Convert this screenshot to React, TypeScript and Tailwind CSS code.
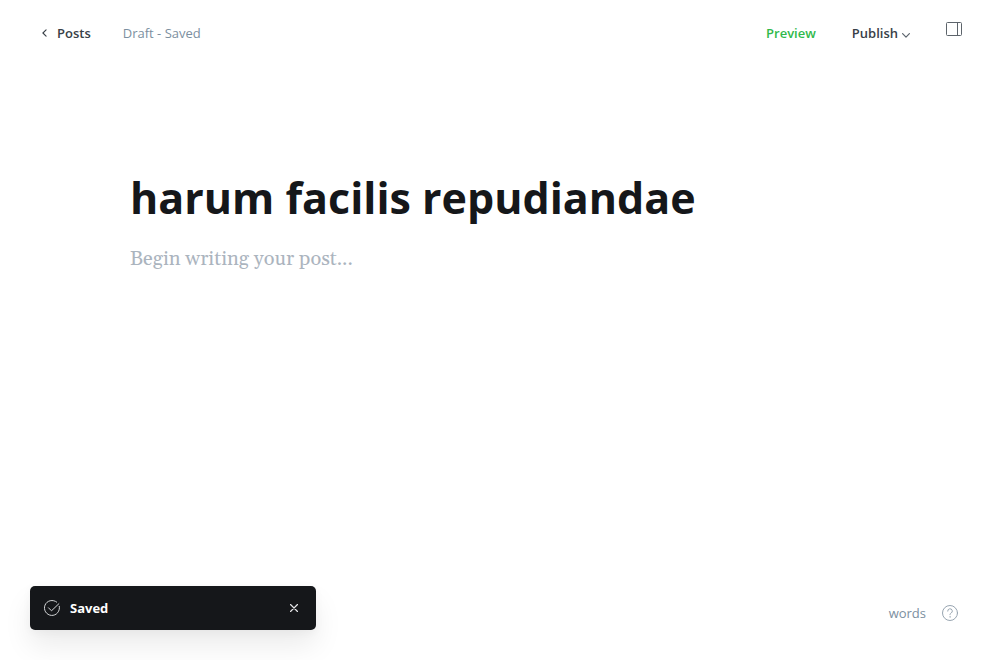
import { useState } from "react";

function ArrowLeft() {
  return (
    <svg viewBox="0 0 6 10" className="h-2 w-[5px]" fill="none" stroke="#394047" strokeWidth="1.4" strokeLinecap="round" strokeLinejoin="round" aria-hidden="true">
      <path d="M5 1 1 5l4 4" />
    </svg>
  );
}

function ArrowDown() {
  return (
    <svg viewBox="0 0 8 5" className="mt-1 h-[5px] w-2" fill="none" stroke="#5d656e" strokeWidth="1.2" strokeLinecap="round" strokeLinejoin="round" aria-hidden="true">
      <path d="m.6.6 3.4 3.5L7.4.6" />
    </svg>
  );
}

function SidebarIcon() {
  return (
    <svg viewBox="0 0 16 14" className="h-[14px] w-4" fill="none" stroke="#5d646b" aria-hidden="true">
      <rect x=".5" y=".5" width="15" height="13" rx="1" />
      <path d="M11.5.5v13" />
    </svg>
  );
}

function CheckCircle() {
  return (
    <svg viewBox="0 0 16 16" className="size-4" fill="none" stroke="#d5d7d9" strokeLinecap="round" strokeLinejoin="round" aria-hidden="true">
      <path d="M15.3 6.3A7.5 7.5 0 1 1 12.7 2.1" />
      <path d="m4.5 7.8 3 3 7.4-7.1" />
    </svg>
  );
}

function CloseIcon() {
  return (
    <svg viewBox="0 0 8 8" className="size-2" fill="none" stroke="#e5e6e8" strokeWidth="1.2" strokeLinecap="round" aria-hidden="true">
      <path d="m.5.5 7 7m0-7-7 7" />
    </svg>
  );
}

function HelpIcon() {
  return (
    <svg viewBox="0 0 16 16" className="size-4" fill="none" stroke="#98a5b1" strokeLinecap="round" strokeLinejoin="round" aria-hidden="true">
      <circle cx="8" cy="8" r="7.5" />
      <path d="M5.7 6.1a2.3 2.3 0 1 1 3.4 2C8.4 8.5 8 8.8 8 9.7" />
      <circle cx="8" cy="11.9" r=".35" fill="#98a5b1" strokeWidth=".5" />
    </svg>
  );
}

export default function App() {
  const [title, setTitle] = useState("harum facilis repudiandae");
  const [body, setBody] = useState("");
  const [toastOpen, setToastOpen] = useState(true);

  return (
    <div className="flex min-h-screen flex-col bg-white font-['Open_Sans','Noto_Sans',sans-serif] text-[13px] leading-5 text-[#394047]">
      <header className="flex items-start justify-between pt-[22px] pr-[38px] pl-[42px]">
        <div className="flex items-center gap-8 pt-px">
          <a href="#posts" className="flex items-center gap-[10px] font-semibold">
            <ArrowLeft />
            Posts
          </a>
          <span className="text-[#7c8fa0]">Draft - Saved</span>
        </div>
        <div className="flex items-start gap-9">
          <button type="button" className="pt-px font-semibold text-[#30b94b]">Preview</button>
          <button type="button" className="flex items-center gap-1 pt-px font-semibold">
            Publish
            <ArrowDown />
          </button>
          <button type="button" aria-label="Settings">
            <SidebarIcon />
          </button>
        </div>
      </header>

      <main className="mx-auto flex w-full max-w-[740px] grow flex-col pt-[121px]">
        <input
          aria-label="Post title"
          value={title}
          onChange={(e) => setTitle(e.target.value)}
          className="h-[66px] w-full bg-transparent text-[43px] font-bold text-[#15171a] outline-none"
        />
        <textarea
          aria-label="Post body"
          placeholder="Begin writing your post..."
          value={body}
          onChange={(e) => setBody(e.target.value)}
          className="mt-3 w-full grow resize-none bg-transparent font-['Gelasio','Liberation_Serif',serif] text-xl leading-[34px] text-[#15171a] outline-none placeholder:text-[#abb4be]"
        />
      </main>

      <footer className="flex min-h-[74px] items-start justify-between pr-[42px] pl-[30px]">
        {toastOpen ? (
          <div role="status" className="flex h-11 w-[286px] items-center gap-[10px] rounded-[5px] bg-[#15171a] pr-[18px] pl-[14px] text-white shadow-[0_16px_28px_rgba(0,0,0,0.08),0_2px_10px_rgba(0,0,0,0.04)]">
            <CheckCircle />
            <span className="grow font-bold">Saved</span>
            <button type="button" aria-label="Close" onClick={() => setToastOpen(false)}>
              <CloseIcon />
            </button>
          </div>
        ) : (
          <span />
        )}
        <div className="flex items-center gap-4 pt-[17px] text-[#7c8fa0]">
          <span>words</span>
          <a href="#help" aria-label="Help">
            <HelpIcon />
          </a>
        </div>
      </footer>
    </div>
  );
}
